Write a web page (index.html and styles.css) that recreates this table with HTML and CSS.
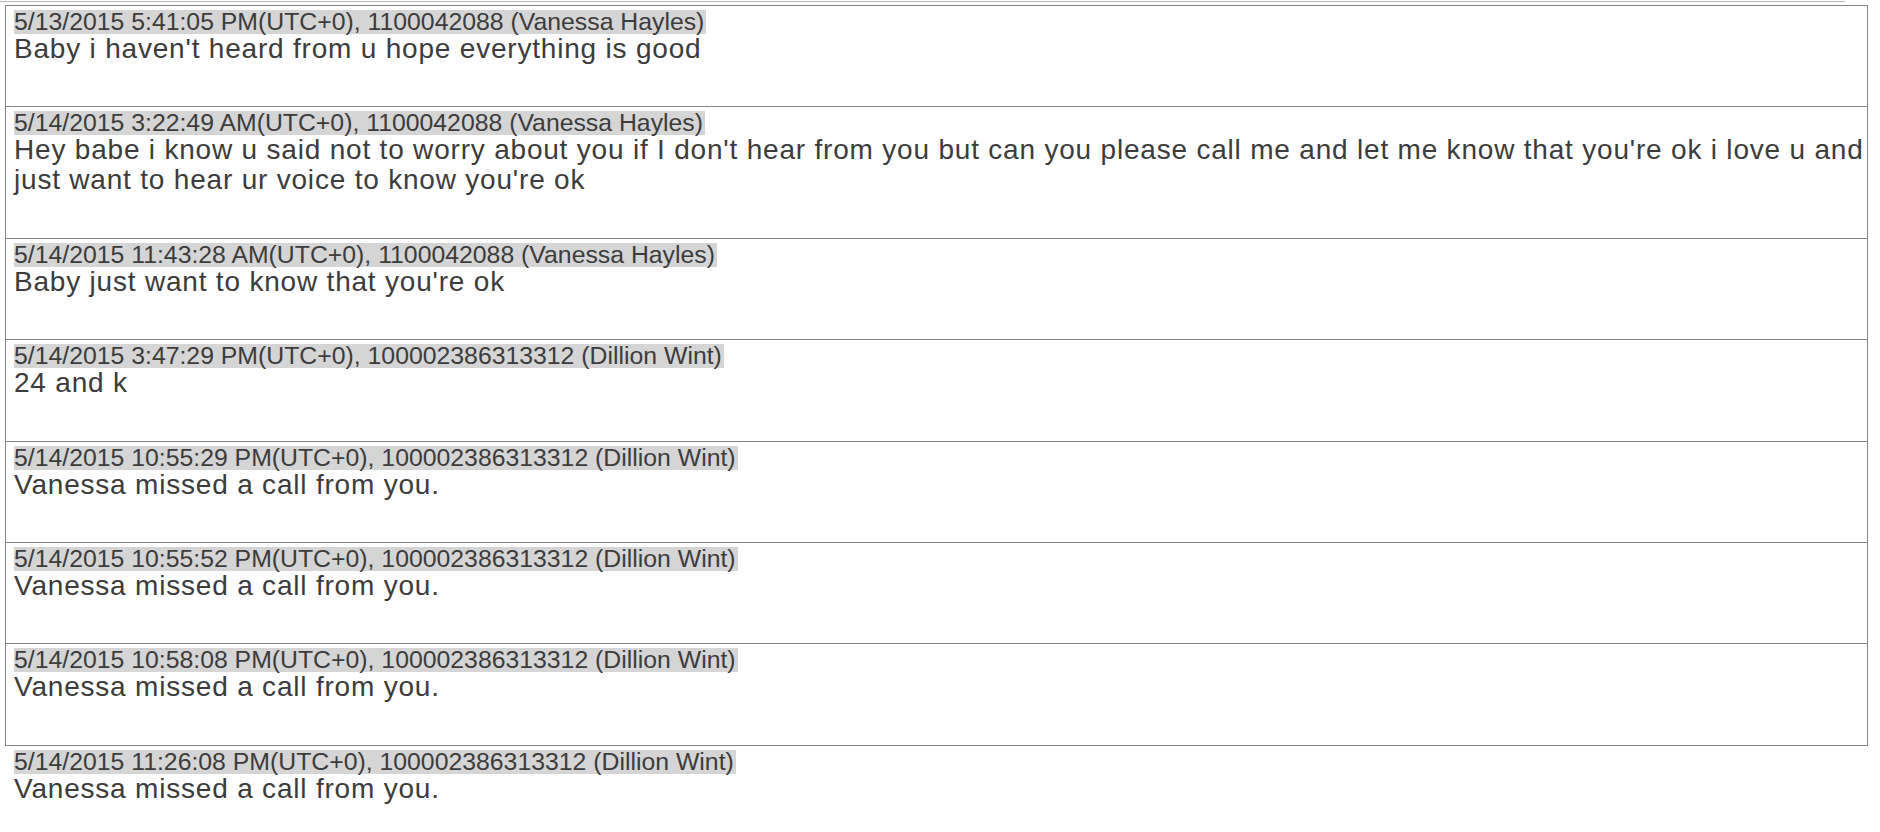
FILE: index.html
```html
<!DOCTYPE html>
<html lang="en">
<head>
  <meta charset="UTF-8">
  <title>Message Log</title>
  <link rel="stylesheet" href="styles.css">
</head>
<body>
  <!-- edge of the previous (cut off) row -->
  <div class="top-line"></div>

  <div class="log">
    <div class="msg">
      <div class="msg-head"><span>5/13/2015 5:41:05 PM(UTC+0), 1100042088 (Vanessa Hayles)</span></div>
      <div class="msg-body">Baby i haven't heard from u hope everything is good</div>
    </div>
    <div class="msg">
      <div class="msg-head"><span>5/14/2015 3:22:49 AM(UTC+0), 1100042088 (Vanessa Hayles)</span></div>
      <div class="msg-body">Hey babe i know u said not to worry about you if I don't hear from you but can you please call me and let me know that you're ok i love u and just want to hear ur voice to know you're ok</div>
    </div>
    <div class="msg">
      <div class="msg-head"><span>5/14/2015 11:43:28 AM(UTC+0), 1100042088 (Vanessa Hayles)</span></div>
      <div class="msg-body">Baby just want to know that you're ok</div>
    </div>
    <div class="msg">
      <div class="msg-head"><span>5/14/2015 3:47:29 PM(UTC+0), 100002386313312 (Dillion Wint)</span></div>
      <div class="msg-body">24 and k</div>
    </div>
    <div class="msg">
      <div class="msg-head"><span>5/14/2015 10:55:29 PM(UTC+0), 100002386313312 (Dillion Wint)</span></div>
      <div class="msg-body">Vanessa missed a call from you.</div>
    </div>
    <div class="msg">
      <div class="msg-head"><span>5/14/2015 10:55:52 PM(UTC+0), 100002386313312 (Dillion Wint)</span></div>
      <div class="msg-body">Vanessa missed a call from you.</div>
    </div>
    <div class="msg">
      <div class="msg-head"><span>5/14/2015 10:58:08 PM(UTC+0), 100002386313312 (Dillion Wint)</span></div>
      <div class="msg-body">Vanessa missed a call from you.</div>
    </div>
    <!-- last row runs off the bottom of the page, no box drawn yet -->
    <div class="msg open">
      <div class="msg-head"><span>5/14/2015 11:26:08 PM(UTC+0), 100002386313312 (Dillion Wint)</span></div>
      <div class="msg-body">Vanessa missed a call from you.</div>
    </div>
  </div>
</body>
</html>
```

FILE: styles.css
```css
/* Basic resets */
* { margin: 0; padding: 0; box-sizing: border-box; }
html, body {
  height: 100%;
  font-family: 'Liberation Sans', Arial, sans-serif;
  color: #3c3c3c;
  background: #fff;
}
body { overflow: hidden; }

.top-line {
  width: 1845px;
  height: 1px;
  margin-top: 1px;
  background: #b8b8b8;
}

/* Message table */
.log {
  margin: 3px 12px 0 5px;
}
.msg {
  border: 1px solid #858585;
  padding: 4px 0 42.4px 8px;
}
.msg + .msg { margin-top: -1px; }
.msg.open { border-color: transparent; }

/* Timestamp / sender line */
.msg-head {
  height: 24px;
}
.msg-head span {
  display: inline-block;
  line-height: 24px;
  font-size: 24.8px;
  padding-right: 2px;
  background: #d5d5d5;
  white-space: nowrap;
}

/* Message text */
.msg-body {
  font-size: 28px;
  letter-spacing: 0.8px;
  line-height: 30px;
}
```
